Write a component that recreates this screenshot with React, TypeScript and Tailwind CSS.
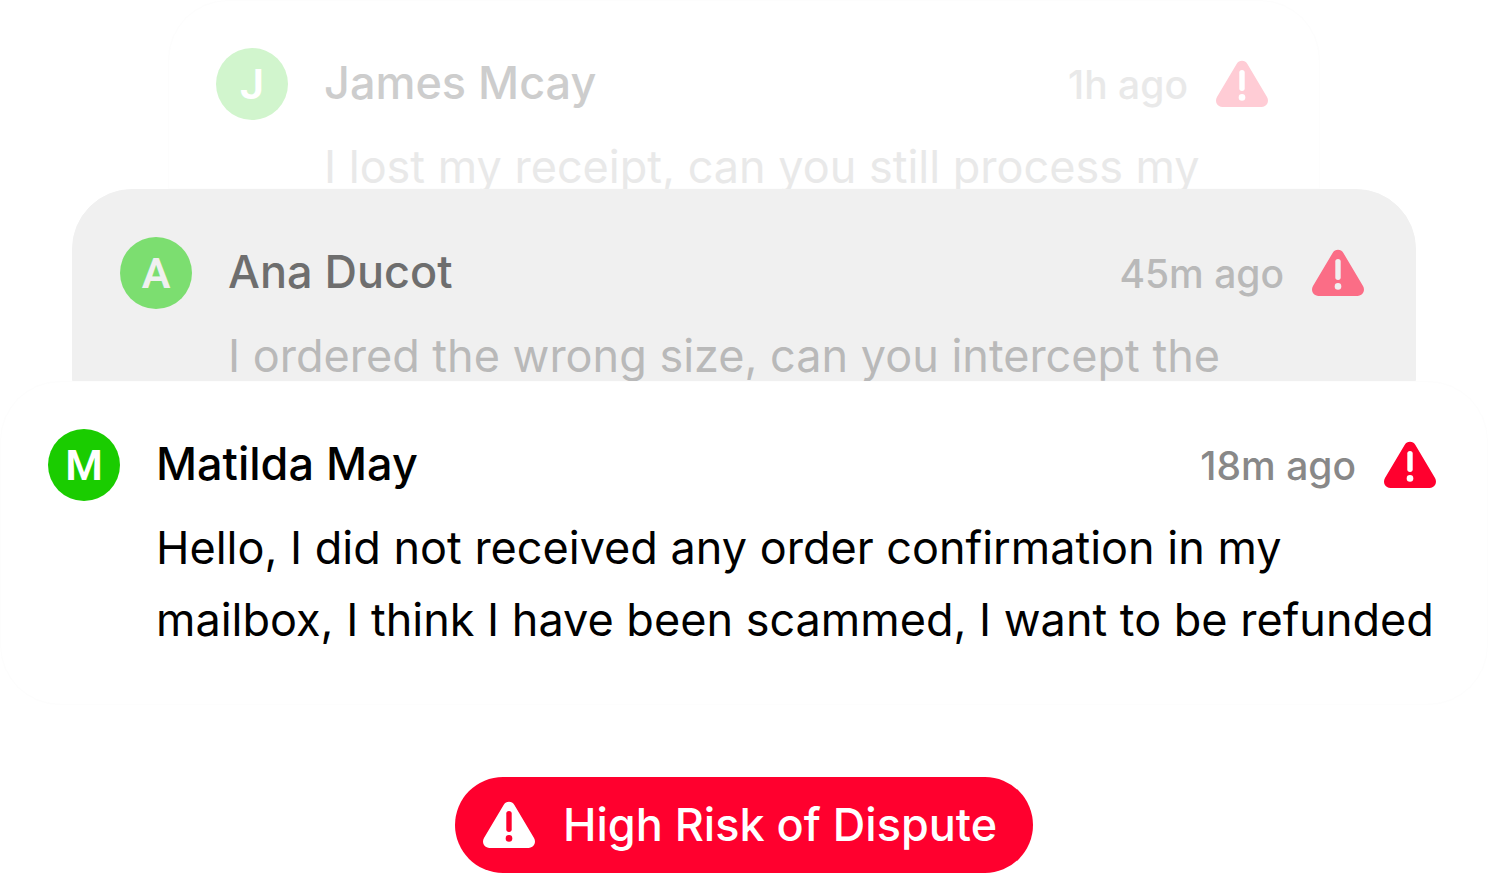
type Message = {
  name: string;
  time: string;
  text: string;
};

type Tone = {
  card: string;
  avatar: string;
  name: string;
  time: string;
  text: string;
  icon: string;
};

const tones: Record<'far' | 'middle' | 'front', Tone> = {
  far: {
    card: 'mx-[168px] h-[189px] rounded-t-[60px] border-[#fdfdfd] bg-white',
    avatar: 'bg-[#d1f5cd] text-white',
    name: 'text-[#cdcdcd]',
    time: 'text-[#e9e9e9]',
    text: 'text-[#e9e9e9]',
    icon: 'text-[#ffccd5]',
  },
  middle: {
    card: 'mx-[72px] h-[192px] rounded-t-[60px] border-[#f0f0f0] bg-[#f0f0f0]',
    avatar: 'bg-[#7cde70] text-[#f0f0f0]',
    name: 'text-[#6e6e6e]',
    time: 'text-[#b9b9b9]',
    text: 'text-[#b9b9b9]',
    icon: 'text-[#fb6d86]',
  },
  front: {
    card: 'min-h-[324px] rounded-[60px] border-[#fdfdfd] bg-white',
    avatar: 'bg-[#1acc00] text-white',
    name: 'text-black',
    time: 'text-[#888888]',
    text: 'text-black',
    icon: 'text-[#ff002e]',
  },
};

function WarningIcon({ className, mark }: { className: string; mark: string }) {
  return (
    <svg viewBox="0 0 60 60" className={`size-[60px] shrink-0 ${className}`} aria-hidden="true">
      <path
        fill="currentColor"
        d="M24.6 10C27 5.8 33 5.8 35.4 10L55 43C57.6 47.6 54.8 53 49.4 53H10.6C5.2 53 2.4 47.6 5 43Z"
      />
      <path d="M30 18.6V34.2" stroke={mark} strokeWidth="5.4" strokeLinecap="round" />
      <circle cx="30" cy="43.4" r="3.3" fill={mark} />
    </svg>
  );
}

// relative makes each card paint over the descenders of the one behind it
function MessageCard({ message, tone }: { message: Message; tone: keyof typeof tones }) {
  const t = tones[tone];

  return (
    <article className={`relative flex gap-9 border px-[47px] pt-[47px] ${t.card}`}>
      <div
        className={`flex size-[72px] shrink-0 items-center justify-center rounded-full font-['Roboto',sans-serif] text-[43px] font-semibold ${t.avatar}`}
      >
        {message.name[0]}
      </div>
      <div className="min-w-0 flex-1">
        <header className="flex h-[72px] items-center gap-6">
          <div className="flex flex-1 items-baseline justify-between leading-[70px]">
            <h2 className={`text-[45px] font-medium ${t.name}`}>{message.name}</h2>
            <time className={`text-[39px] font-medium ${t.time}`}>{message.time}</time>
          </div>
          <WarningIcon className={t.icon} mark={tone === 'middle' ? '#f0f0f0' : '#ffffff'} />
        </header>
        <p className={`mt-[11px] text-[45px] leading-[72px] ${t.text}`}>{message.text}</p>
      </div>
    </article>
  );
}

export default function App() {
  return (
    <main className="bg-white font-['Inter',sans-serif]">
      <MessageCard
        tone="far"
        message={{
          name: 'James Mcay',
          time: '1h ago',
          text: 'I lost my receipt, can you still process my',
        }}
      />
      <MessageCard
        tone="middle"
        message={{
          name: 'Ana Ducot',
          time: '45m ago',
          text: 'I ordered the wrong size, can you intercept the',
        }}
      />
      <MessageCard
        tone="front"
        message={{
          name: 'Matilda May',
          time: '18m ago',
          text: 'Hello, I did not received any order confirmation in my mailbox, I think I have been scammed, I want to be refunded',
        }}
      />
      <div className="mx-auto mt-[72px] flex h-24 w-fit items-center gap-6 rounded-full bg-[#ff002e] pr-9 pl-6 text-[45px] leading-[72px] font-medium text-white">
        <WarningIcon className="text-white" mark="#ff002e" />
        <span>High Risk of Dispute</span>
      </div>
    </main>
  );
}
